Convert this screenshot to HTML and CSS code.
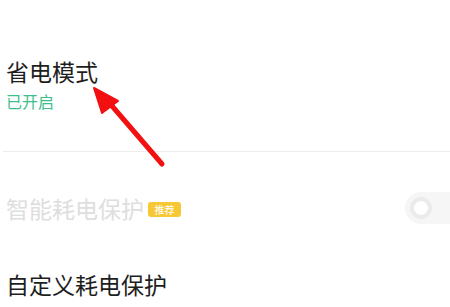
FILE: index.html
```html
<!DOCTYPE html>
<html lang="zh">
<head>
<meta charset="utf-8">
<link rel="stylesheet" href="styles.css">
</head>
<body>
<div class="page">
  <section class="item first">
    <div class="title">省电模式</div>
    <div class="sub">已开启</div>
  </section>
  <div class="divider"></div>
  <section class="item row disabled">
    <div class="label">
      <span class="title">智能耗电保护</span>
      <span class="badge">推荐</span>
    </div>
    <div class="toggle"><span class="knob"></span></div>
  </section>
  <section class="item row last">
    <span class="title">自定义耗电保护</span>
  </section>
  <svg class="arrow" width="450" height="307" viewBox="0 0 450 307">
    <line x1="162" y1="164" x2="106" y2="99" stroke="#f21010" stroke-width="5" stroke-linecap="round"/>
    <polygon points="94,88 102,113 118,101" fill="#f21010" stroke="#f21010" stroke-width="2" stroke-linejoin="round"/>
  </svg>
</div>
</body>
</html>
```

FILE: styles.css
```css
html, body {
  margin: 0;
  padding: 0;
  background: #ffffff;
}
.page {
  position: relative;
  width: 450px;
  height: 307px;
  overflow: hidden;
  font-family: "Noto Sans CJK SC", "Noto Sans", sans-serif;
}
.item {
  padding-left: 6px;
}
.first {
  padding-top: 56px;
  height: 151px;
  box-sizing: border-box;
}
.title {
  font-size: 23px;
  line-height: 30px;
  color: #1e1e1e;
}
.sub {
  margin-top: 5px;
  font-size: 16px;
  line-height: 20px;
  color: #3dbf8b;
}
.divider {
  margin-left: 3px;
  height: 1px;
  background: #ececec;
}
.row {
  display: flex;
  align-items: center;
  justify-content: space-between;
}
.disabled {
  margin-top: 41px;
  height: 30px;
}
.disabled .title {
  color: #dedede;
}
.label {
  display: flex;
  align-items: center;
}
.badge {
  margin-left: 4px;
  margin-top: 2px;
  width: 33px;
  height: 15px;
  border-radius: 3px;
  background: #f7c836;
  color: #ffffff;
  font-size: 10px;
  line-height: 15px;
  text-align: center;
}
.toggle {
  width: 45px;
  height: 32px;
  border-radius: 16px 0 0 16px;
  background: #f6f6f6;
  display: flex;
  align-items: center;
  padding-left: 3px;
  box-sizing: border-box;
}
.knob {
  width: 22px;
  height: 22px;
  border-radius: 50%;
  background: #ffffff;
  border: 4px solid #ebebeb;
  box-sizing: border-box;
  margin-left: 2px;
}
.last {
  margin-top: 46px;
  height: 30px;
}
.arrow {
  position: absolute;
  left: 0;
  top: 0;
}
```
